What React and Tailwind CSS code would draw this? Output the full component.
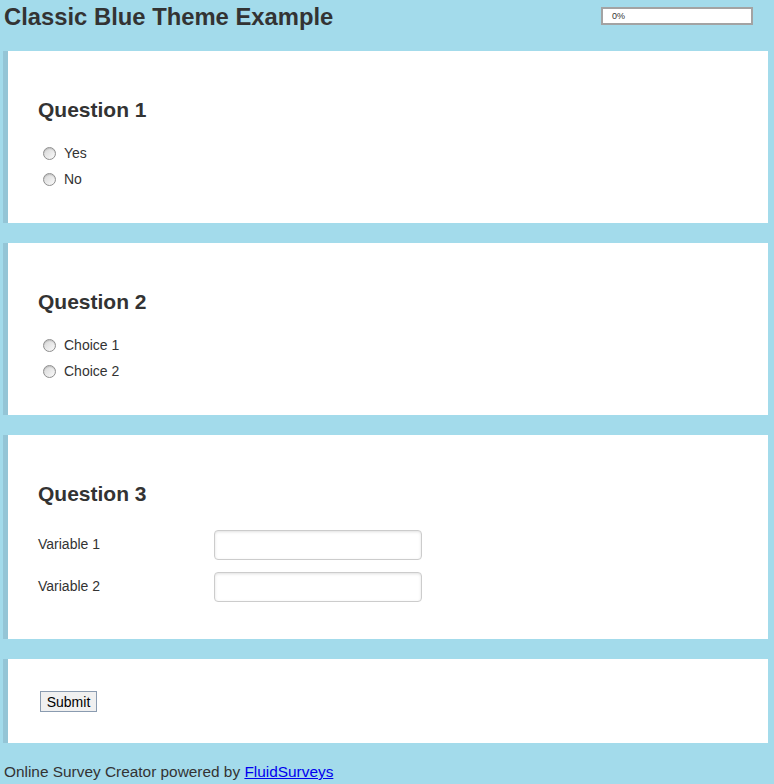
import React from 'react';

const Radio = ({ label }) => (
    <label className="flex items-center h-[26px] pl-[5px]">
        <span className="w-[13px] h-[13px] rounded-full border border-[#8e8e8e] bg-gradient-to-br from-[#d6d6d6] to-[#fbfbfb] shadow-[inset_0_1px_1px_rgba(0,0,0,0.15)]" />
        <span className="ml-[8px] text-[14px] text-[#333]">{label}</span>
    </label>
);

const Card = ({ className = '', children }) => (
    <section className={`bg-white border-l-[5px] border-[#94c5d6] ml-[3px] mr-[6px] ${className}`}>
        {children}
    </section>
);

const Heading = ({ children }) => (
    <h3 className="text-[21px] leading-[24px] font-bold text-[#333]">{children}</h3>
);

const TextField = ({ label }) => (
    <div className="flex items-center h-[30px]">
        <span className="w-[176px] text-[14px] text-[#333] -mt-[2px]">{label}</span>
        <input className="w-[208px] h-[30px] border border-[#ccc] rounded-[4px] bg-white shadow-[inset_0_1px_3px_rgba(0,0,0,0.12)] focus:outline-none" />
    </div>
);

export default function App() {
    return (
        <div className="min-h-[784px] bg-[#a3dbeb] font-['Liberation_Sans',Arial,sans-serif]">
            {/* header */}
            <div className="flex items-start justify-between h-[51px]">
                <h1 className="pl-[4px] pt-[3px] text-[23.8px] leading-[28px] font-bold text-[#333]">Classic Blue Theme Example</h1>
                <div className="mt-[7px] mr-[21px] w-[152px] h-[18px] border-2 border-[#a3a3a3] bg-white flex items-center pt-[1px] pl-[9px] text-[9px] text-[#333]">0%</div>
            </div>

            <div className="flex flex-col gap-[20px]">
                <Card className="h-[172px] pt-[47px] pl-[30px]">
                    <Heading>Question 1</Heading>
                    <div className="mt-[18px]">
                        <Radio label="Yes" />
                        <Radio label="No" />
                    </div>
                </Card>

                <Card className="h-[172px] pt-[47px] pl-[30px]">
                    <Heading>Question 2</Heading>
                    <div className="mt-[18px]">
                        <Radio label="Choice 1" />
                        <Radio label="Choice 2" />
                    </div>
                </Card>

                <Card className="h-[204px] pt-[47px] pl-[30px]">
                    <Heading>Question 3</Heading>
                    <div className="mt-[24px] flex flex-col gap-[12px]">
                        <TextField label="Variable 1" />
                        <TextField label="Variable 2" />
                    </div>
                </Card>

                <Card className="h-[84px] pt-[32px] pl-[32px]">
                    <button className="block w-[57px] h-[21px] border border-[#8a9bb0] bg-[#f0f0f0] text-[14px] leading-[18px] text-black">Submit</button>
                </Card>
            </div>

            <div className="pl-[4px] pt-[20px] text-[15.4px] leading-[18px] text-[#333]">
                Online Survey Creator powered by <a href="#" className="text-[#0000ee] underline">FluidSurveys</a>
            </div>
        </div>
    );
}
